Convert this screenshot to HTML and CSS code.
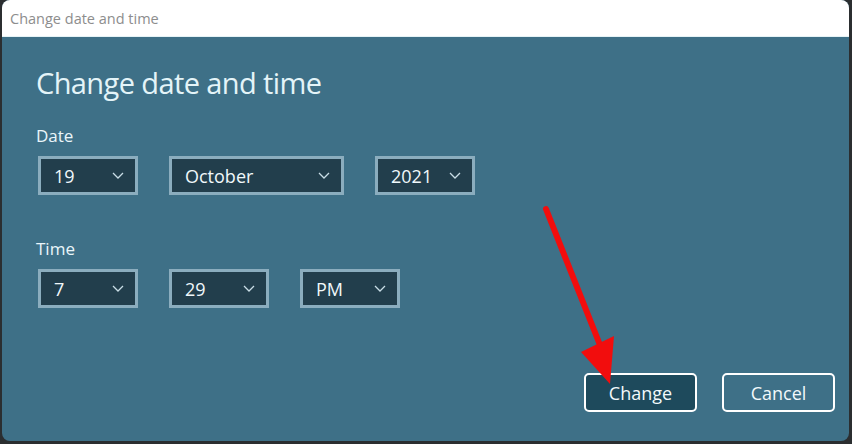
FILE: index.html
```html
<!DOCTYPE html>
<html>
<head>
<meta charset="utf-8">
<link rel="stylesheet" href="styles.css">
</head>
<body>
<div class="window">
  <div class="titlebar">Change date and time</div>
  <div class="content">
    <h1 class="heading">Change date and time</h1>
    <div class="label label-date">Date</div>
    <div class="row">
      <div class="select w-sm"><span>19</span><svg class="chev" width="12" height="7" viewBox="0 0 12 7"><polyline points="1,1 6,6 11,1"/></svg></div>
      <div class="select w-lg"><span>October</span><svg class="chev" width="12" height="7" viewBox="0 0 12 7"><polyline points="1,1 6,6 11,1"/></svg></div>
      <div class="select w-sm"><span>2021</span><svg class="chev" width="12" height="7" viewBox="0 0 12 7"><polyline points="1,1 6,6 11,1"/></svg></div>
    </div>
    <div class="label label-time">Time</div>
    <div class="row">
      <div class="select w-sm"><span>7</span><svg class="chev" width="12" height="7" viewBox="0 0 12 7"><polyline points="1,1 6,6 11,1"/></svg></div>
      <div class="select w-sm"><span>29</span><svg class="chev" width="12" height="7" viewBox="0 0 12 7"><polyline points="1,1 6,6 11,1"/></svg></div>
      <div class="select w-sm"><span>PM</span><svg class="chev" width="12" height="7" viewBox="0 0 12 7"><polyline points="1,1 6,6 11,1"/></svg></div>
    </div>
    <div class="buttons">
      <div class="btn btn-primary">Change</div>
      <div class="btn">Cancel</div>
    </div>
  </div>
  <svg class="arrow" width="852" height="444" viewBox="0 0 852 444">
    <line x1="546" y1="209" x2="600" y2="345" stroke="#f20d0d" stroke-width="6" stroke-linecap="round"/>
    <polygon points="581,352 614,336 610,384" fill="#f20d0d"/>
  </svg>
</div>
</body>
</html>
```
FILE: styles.css
```css
html, body {
  margin: 0;
  padding: 0;
  background: #2b2e30;
  width: 852px;
  height: 444px;
  overflow: hidden;
  font-family: "Open Sans", "Noto Sans", sans-serif;
}
.window {
  position: relative;
  margin-left: 2px;
  width: 847px;
  height: 441px;
  border-radius: 8px;
  overflow: hidden;
  background: #3e7087;
}
.titlebar {
  height: 37px;
  background: #ffffff;
  border-bottom: 1px solid #e6f3f6;
  box-sizing: border-box;
  color: #8d8d8d;
  font-size: 14.5px;
  line-height: 37px;
  padding-left: 8px;
}
.content {
  padding-left: 34px;
  color: #eaf6fa;
}
.heading {
  margin: 0;
  padding-top: 26px;
  font-size: 29px;
  font-weight: 400;
  line-height: 40px;
  letter-spacing: -0.6px;
  color: #e4f4f8;
}
.label {
  font-size: 17px;
  line-height: 24px;
}
.label-date { margin-top: 21px; }
.label-time { margin-top: 42px; }
.row {
  display: flex;
  gap: 31px;
  margin-left: 2px;
  margin-top: 8px;
}
.select {
  box-sizing: border-box;
  height: 39px;
  border: 3px solid #8badbe;
  background: #223e4c;
  display: flex;
  align-items: center;
  justify-content: space-between;
  padding: 0 11px 0 13px;
  font-size: 18px;
  color: #f0f8fb;
}
.w-sm { width: 100px; }
.w-lg { width: 175px; }
.chev polyline {
  fill: none;
  stroke: #c9dde6;
  stroke-width: 1.3;
}
.buttons {
  display: flex;
  justify-content: flex-end;
  gap: 25px;
  margin-top: 65px;
  padding-right: 14px;
}
.btn {
  box-sizing: border-box;
  width: 113px;
  height: 39px;
  border: 2px solid #ffffff;
  border-radius: 5px;
  display: flex;
  align-items: center;
  justify-content: center;
  font-size: 18px;
  color: #f2f9fb;
}
.btn-primary {
  background: #1e4a5c;
}
.arrow {
  position: absolute;
  left: -2px;
  top: 0;
  pointer-events: none;
}
```
